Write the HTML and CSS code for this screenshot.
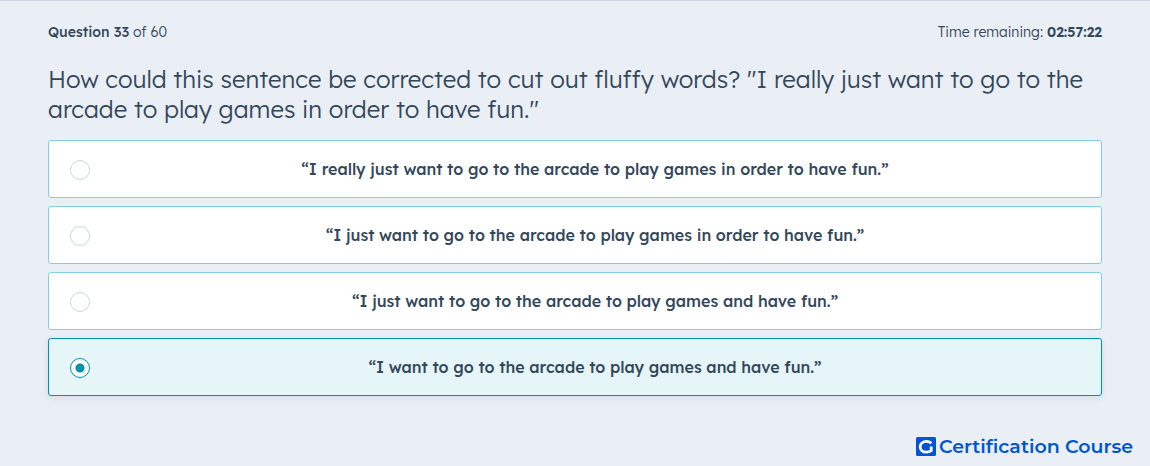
FILE: index.html
```html
<!DOCTYPE html>
<html lang="en">
<head>
<meta charset="utf-8">
<meta name="viewport" content="width=device-width, initial-scale=1">
<title>Certification Course</title>
<link rel="stylesheet" href="styles.css">
</head>
<body>
<main class="exam">
  <header class="status">
    <p class="progress"><strong>Question 33</strong> of 60</p>
    <p class="timer">Time remaining: <strong>02:57:22</strong></p>
  </header>
  <form class="quiz">
    <h1 class="question" id="question">How could this sentence be corrected to cut out fluffy words? "I really just want to go to the arcade to play games in order to have fun."</h1>
    <div class="answers" role="radiogroup" aria-labelledby="question">
      <label class="answer"><input class="radio" type="radio" name="answer"><span class="text">“I really just want to go to the arcade to play games in order to have fun.”</span></label>
      <label class="answer"><input class="radio" type="radio" name="answer"><span class="text">“I just want to go to the arcade to play games in order to have fun.”</span></label>
      <label class="answer"><input class="radio" type="radio" name="answer"><span class="text">“I just want to go to the arcade to play games and have fun.”</span></label>
      <label class="answer"><input class="radio" type="radio" name="answer" checked><span class="text">“I want to go to the arcade to play games and have fun.”</span></label>
    </div>
  </form>
</main>
<footer class="brand">
  <svg class="logo" viewBox="0 0 20 20" aria-hidden="true"><rect width="20" height="19" rx="1.5" fill="#0055d0"/><path d="M15.4 6.3C14 5 12.4 4.4 10.4 4.4C6.7 4.4 4.1 6.7 4.1 9.8S6.7 15.2 10.4 15.2C12.3 15.2 13.9 14.7 15.2 13.7V9.6" fill="none" stroke="#fff" stroke-width="2.8"/></svg>
  <span class="name">Certification Course</span>
</footer>
</body>
</html>
```
FILE: styles.css
```css
* {
  box-sizing: border-box;
}

body {
  margin: 0;
  border-top: 1px solid #cbd6e2;
  background: #eaeff6;
  color: #33475b;
  font-family: "Lexend Deca", Inter, sans-serif;
}

.exam {
  padding: 20px 48px 0;
}

.status {
  display: flex;
  justify-content: space-between;
  font-size: 14px;
  line-height: 22px;
  font-weight: 300;
}

.status p {
  margin: 0;
}

.progress strong {
  font-weight: 500;
}

.timer strong {
  font-weight: 600;
}

.question {
  margin: 21px 0 16px;
  font-size: 24px;
  line-height: 30px;
  font-weight: 300;
}

.answers {
  display: grid;
  gap: 8px;
}

.answer {
  display: flex;
  align-items: center;
  gap: 20px;
  min-height: 58px;
  padding: 8px 21px;
  border: 1px solid #7fd1de;
  border-radius: 3px;
  background: #fff;
  cursor: pointer;
}

.answer:has(:checked) {
  border-color: #0091ae;
  background: #e5f5f8;
  box-shadow: 0 2px 6px rgba(51, 71, 91, 0.12);
}

.radio {
  appearance: none;
  flex: none;
  width: 20px;
  height: 20px;
  margin: 2px 0 0;
  border: 1px solid #cbd6e2;
  border-radius: 50%;
  background: #fff;
}

.radio:checked {
  border-color: #0091ae;
  background: radial-gradient(circle, #0091ae 4px, #fff 5px);
}

.text {
  flex: 1;
  text-align: center;
  font-size: 16px;
  line-height: 24px;
  font-weight: 500;
}

.brand {
  display: flex;
  justify-content: flex-end;
  align-items: center;
  gap: 3px;
  padding: 39px 17px 7px;
  color: #0055d0;
}

.logo {
  width: 20px;
  height: 20px;
}

.name {
  font-family: Montserrat, Inter, sans-serif;
  font-size: 19px;
  line-height: 24px;
  font-weight: 600;
}
```
